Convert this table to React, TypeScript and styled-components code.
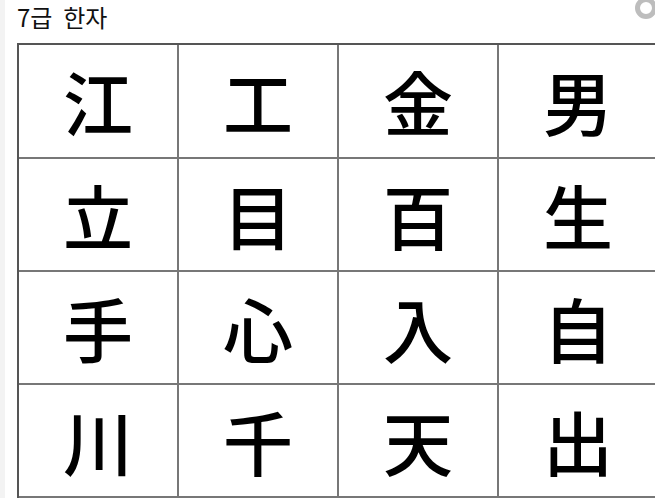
import React from "react";
import styled, { createGlobalStyle } from "styled-components";

const Global = createGlobalStyle`
  html, body { margin: 0; padding: 0; background: #fff; overflow: hidden; }
  #root { width: 655px; height: 498px; overflow: hidden; }
`;

const Page = styled.div`
  display: flex;
  width: 655px;
  height: 498px;
  overflow: hidden;
  position: relative;
`;

const Gutter = styled.div`
  width: 5px;
  flex: none;
  background: #f3f3f3;
`;

const Main = styled.div`
  flex: 1;
  display: flex;
  flex-direction: column;
  padding-left: 12px;
  min-width: 0;
`;

const Title = styled.h1`
  margin: 0;
  height: 45px;
  box-sizing: border-box;
  padding-top: 1px;
  font-family: "Noto Sans CJK KR", "Noto Sans", sans-serif;
  font-weight: 400;
  font-size: 24px;
  line-height: 32px;
  color: #111;
  white-space: pre;
`;

const Grid = styled.div`
  display: grid;
  grid-template-columns: repeat(4, 160px);
  grid-template-rows: 114px repeat(3, 113px);
  border-top: 2px solid #555;
  border-left: 2px solid #555;
  width: max-content;
  box-sizing: border-box;
`;

const Cell = styled.div`
  display: flex;
  align-items: center;
  justify-content: center;
  border-right: 2px solid #777;
  border-bottom: 2px solid #777;
  font-family: "Noto Sans CJK KR", "Noto Sans CJK SC", sans-serif;
  font-weight: 500;
  font-size: 70px;
  line-height: 1;
  color: #000;
`;

const Ring = styled.div`
  position: absolute;
  top: 0px;
  right: -2px;
  width: 12px;
  height: 12px;
  border: 5px solid #bdbdbd;
  border-radius: 50%;
  transform: translateY(-3px);
`;

const chars = [
  "江", "工", "金", "男",
  "立", "目", "百", "生",
  "手", "心", "入", "自",
  "川", "千", "天", "出",
];

export default function App() {
  return (
    <Page>
      <Global />
      <Gutter />
      <Main>
        <Title>{"7급  한자"}</Title>
        <Grid>
          {chars.map((c, i) => (
            <Cell key={i}>{c}</Cell>
          ))}
        </Grid>
      </Main>
      <Ring />
    </Page>
  );
}
